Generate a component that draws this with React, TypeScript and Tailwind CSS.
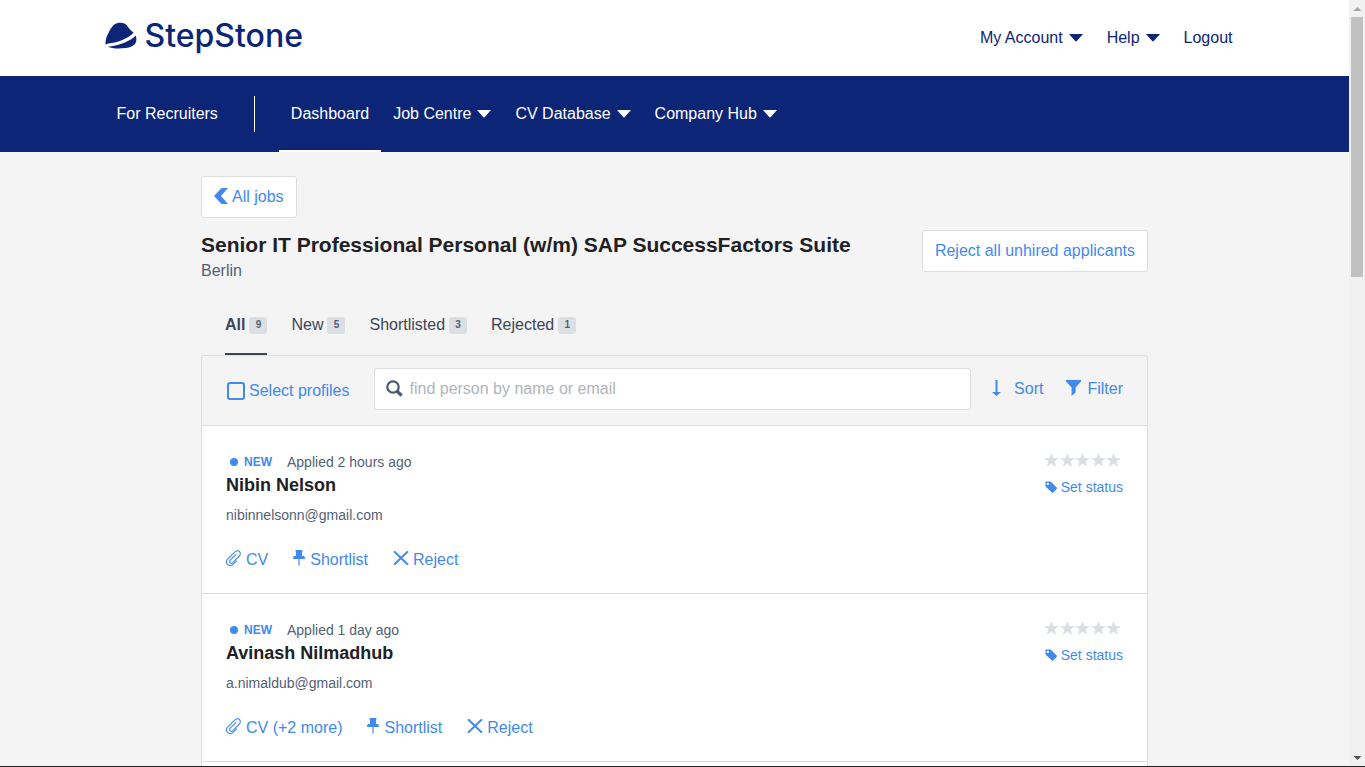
import React, { useState } from "react";

type IconProps = { className?: string };

function HatLogo() {
  return (
    <svg viewBox="46 34 96 82" className="h-[27px] w-8 fill-[#0c2577]" aria-hidden="true">
      <path d="M47 102 C46 90 50 77 57 65 C62 55 68 45 76 40 C84 35 98 34.500 106 39 C114 44 119 56 127 62 C129 64 131 65 132 67 C124 76 108 86 90 92 C74 98 58 98 47 102 Z" />
      <path d="M54 109 C70 107 90 103 106 96 C120 90 132 83 138 75 C142 83 142 93 137 100 C132 107 122 111 108 113 C88 115.500 66 115 54 109 Z" />
    </svg>
  );
}

function Caret({ className = "" }: IconProps) {
  return (
    <svg viewBox="0 0 14 8" className={`h-2 w-[14px] fill-current ${className}`} aria-hidden="true">
      <path d="M0 0H14L7.800 7.100Q7 7.700 6.200 7.100Z" />
    </svg>
  );
}

function ChevronIcon() {
  return (
    <svg viewBox="0 0 14 16" className="mb-[3px] h-4 w-[14px] fill-current" aria-hidden="true">
      <path d="M7.500 0H14L7 8L14 16H7.500L0 8Z" />
    </svg>
  );
}

function SearchIcon() {
  return (
    <svg viewBox="0 0 17 17" className="h-[17px] w-[17px] fill-none stroke-[#4b586e]" aria-hidden="true">
      <circle cx="7" cy="7" r="5.700" strokeWidth="2.200" />
      <path d="M11 11L15.600 15.600" strokeWidth="3.200" />
    </svg>
  );
}

function SortIcon() {
  return (
    <svg viewBox="0 0 9 16" className="mb-[2px] h-4 w-[9px] fill-current" aria-hidden="true">
      <path d="M3.500 0H5.500V12H9L4.500 16L0 12H3.500Z" />
    </svg>
  );
}

function FilterIcon() {
  return (
    <svg viewBox="0 0 15 16" className="mb-[2px] h-4 w-[15px] fill-current" aria-hidden="true">
      <path d="M0 0H15V1.500L9.600 7.500V12.500L5.600 16V7.500L0 1.500Z" />
    </svg>
  );
}

function StarIcon() {
  return (
    <svg viewBox="0 0 15 14" className="h-[14px] w-[15px] fill-current" aria-hidden="true">
      <path d="M7.500 0L9.400 5.100L15 5.300L10.600 8.600L12.200 14L7.500 10.800L2.800 14L4.400 8.600L0 5.300L5.600 5.100Z" />
    </svg>
  );
}

function TagIcon() {
  return (
    <svg viewBox="0 0 12 12" className="h-3 w-3 fill-current" aria-hidden="true">
      <path
        fillRule="evenodd"
        d="M0.500 0.500H5.600L11.600 6.500Q12.300 7.200 11.600 7.900L8.300 11.400Q7.600 12 6.900 11.400L0.500 5.400ZM2.800 1.700A1.200 1.200 0 1 0 2.800 4.100A1.200 1.200 0 1 0 2.800 1.700Z"
      />
    </svg>
  );
}

function ClipIcon() {
  return (
    <svg
      viewBox="0 0 15 16"
      className="mb-1 h-4 w-[15px] fill-none stroke-current"
      strokeWidth="1.100"
      strokeLinecap="round"
      aria-hidden="true"
    >
      <path d="M10.500 10.800L7.300 14.200C5.500 16 3 15.800 1.600 14.400C0.200 13 0.200 10.700 1.700 9.100L8.900 1.800C10.200 0.400 12.200 0.300 13.400 1.500C14.700 2.700 14.600 4.700 13.300 6L6.700 12.600C5.800 13.400 4.700 13.400 4 12.700C3.300 12 3.400 10.900 4.200 10.100L10 4.300" />
    </svg>
  );
}

function PinIcon() {
  return (
    <svg viewBox="0 0 12 16" className="mb-1 h-4 w-3 fill-current" aria-hidden="true">
      <path d="M2.500 0H9.500V1.500H9V6H11Q12 6.500 12 9H0Q0 6.500 1 6H3V1.500H2.500Z" />
      <path d="M5.400 9H6.600V15.500H5.400Z" />
    </svg>
  );
}

function CrossIcon() {
  return (
    <svg viewBox="0 0 16 14" className="mb-1 h-[14px] w-4 fill-none stroke-current" strokeWidth="2" aria-hidden="true">
      <path d="M1 0.300L15 13.700M15 0.300L1 13.700" />
    </svg>
  );
}

const mainLinks = ["Job Centre", "CV Database", "Company Hub"];

const tabs = [
  { label: "All", count: 9 },
  { label: "New", count: 5 },
  { label: "Shortlisted", count: 3 },
  { label: "Rejected", count: 1 },
];

const applicants = [
  { name: "Nibin Nelson", email: "nibinnelsonn@gmail.com", applied: "Applied 2 hours ago", cv: "CV" },
  { name: "Avinash Nilmadhub", email: "a.nimaldub@gmail.com", applied: "Applied 1 day ago", cv: "CV (+2 more)" },
];

function TopBar() {
  return (
    <header className="bg-white text-[#0c2577]">
      <div className="mx-auto flex h-[76px] max-w-[1140px] items-center justify-between">
        <a href="#" className="flex items-center gap-2 pb-[5px]" aria-label="StepStone">
          <HatLogo />
          <span className="font-['Inter',sans-serif] text-[32px] leading-10 font-medium">StepStone</span>
        </a>
        <nav className="flex items-center gap-6 pr-3" aria-label="Account">
          <button type="button" className="flex items-center gap-[6px]">
            My Account
            <Caret />
          </button>
          <button type="button" className="flex items-center gap-[6px]">
            Help
            <Caret />
          </button>
          <a href="#">Logout</a>
        </nav>
      </div>
    </header>
  );
}

function MainNav() {
  return (
    <nav className="bg-[#0c2577] text-white" aria-label="Main">
      <div className="mx-auto flex h-[76px] max-w-[1140px] items-stretch">
        <a href="#" className="flex items-center px-3">
          For Recruiters
        </a>
        <div className="mx-6 h-9 w-px self-center bg-white" />
        <a href="#" aria-current="page" className="flex items-center border-y-2 border-t-transparent border-b-white px-3">
          Dashboard
        </a>
        {mainLinks.map((label) => (
          <button key={label} type="button" className="flex items-center gap-[6px] px-3">
            {label}
            <Caret />
          </button>
        ))}
      </div>
    </nav>
  );
}

function ApplicantRow({ name, email, applied, cv }: (typeof applicants)[number]) {
  return (
    <li className="flex justify-between border-b border-[#dbdfe2] bg-white px-6 pt-[26px] pb-[21px]">
      <div>
        <p className="flex items-center text-sm leading-5 text-[#525f75]">
          <span className="ml-1 h-2 w-2 rounded-full bg-[#4289ef]" />
          <span className="mr-[15px] ml-[6px] text-xs leading-5 font-bold text-[#4289ef]">NEW</span>
          {applied}
        </p>
        <h2 className="text-lg leading-[26px] font-bold text-[#1f2124]">{name}</h2>
        <p className="mt-[7px] text-sm leading-5 text-[#525f75]">{email}</p>
        <div className="mt-[23px] flex gap-[25px] leading-6 text-[#4289ef]">
          <a href="#" className="flex items-center gap-[5px]">
            <ClipIcon />
            {cv}
          </a>
          <button type="button" className="flex items-center gap-[5px]">
            <PinIcon />
            Shortlist
          </button>
          <button type="button" className="flex items-center gap-1">
            <CrossIcon />
            Reject
          </button>
        </div>
      </div>
      <div className="flex flex-col items-end">
        <div
          className="mr-[2px] flex h-4 w-[77px] items-center justify-between text-[#dbdfe3]"
          role="img"
          aria-label="Not rated"
        >
          {[1, 2, 3, 4, 5].map((n) => (
            <StarIcon key={n} />
          ))}
        </div>
        <button type="button" className="mt-[9px] flex items-center gap-1 text-sm leading-5 text-[#4289ef]">
          <TagIcon />
          Set status
        </button>
      </div>
    </li>
  );
}

function ScrollTrack() {
  return (
    <div className="flex w-4 shrink-0 flex-col items-center bg-[#f1f1f1]" aria-hidden="true">
      <svg viewBox="0 0 16 17" className="h-[17px] w-4 shrink-0 fill-[#a3a3a3]">
        <path d="M4.500 11L8.500 7L12.500 11Z" />
      </svg>
      <div className="h-[260px] w-3 bg-[#c1c1c1]" />
      <svg viewBox="0 0 16 17" className="mt-auto h-[17px] w-4 shrink-0 fill-[#505050]">
        <path d="M4.500 7L8.500 11L12.500 7Z" />
      </svg>
    </div>
  );
}

export default function App() {
  const [activeTab, setActiveTab] = useState("All");
  return (
    <div className="flex h-screen flex-col font-['Liberation_Sans',Arial,sans-serif] text-base leading-6">
      <div className="flex min-h-0 flex-1">
        <div className="min-w-0 flex-1 overflow-hidden bg-[#f4f4f4]">
          <TopBar />
          <MainNav />
          <main className="mx-auto max-w-[947px] pt-6">
            <a
              href="#"
              className="inline-flex h-[42px] items-center gap-1 rounded-[3px] border border-[#dbdfe2] bg-white px-3 text-[#4289ef]"
            >
              <ChevronIcon />
              All jobs
            </a>
            <div className="mt-3 flex items-start justify-between">
              <div>
                <h1 className="text-[21px] leading-[30px] font-bold text-[#1f2124]">
                  Senior IT Professional Personal (w/m) SAP SuccessFactors Suite
                </h1>
                <p className="mt-px leading-5 text-[#525f75]">Berlin</p>
              </div>
              <button
                type="button"
                className="h-[42px] rounded-[3px] border border-[#dbdfe2] bg-white px-3 text-[#4289ef]"
              >
                Reject all unhired applicants
              </button>
            </div>
            <div className="mt-8 flex gap-6 px-6" role="tablist">
              {tabs.map(({ label, count }) => (
                <button
                  key={label}
                  type="button"
                  role="tab"
                  aria-selected={activeTab === label}
                  onClick={() => setActiveTab(label)}
                  className={`flex h-[42px] items-start gap-1 border-b-2 text-[#3b4557] ${
                    activeTab === label ? "border-[#3b4557] font-bold" : "border-transparent"
                  }`}
                >
                  {label}
                  <span className="mt-1 h-[17px] w-[18px] rounded-[3px] bg-[#dbdfe3] text-center text-[10px] leading-4 font-bold text-[#525f75]">
                    {count}
                  </span>
                </button>
              ))}
            </div>
            <section className="rounded-t-[3px] border border-b-0 border-[#dbdfe2]">
              <div className="flex h-[70px] items-center border-b border-[#dbdfe2] px-6 pb-1">
                <label className="flex items-center gap-1 pt-1 text-[#4289ef]">
                  <input
                    type="checkbox"
                    className="ml-px h-[18px] w-[18px] appearance-none rounded-[3px] border-2 border-[#4289ef] checked:bg-[#4289ef]"
                  />
                  Select profiles
                </label>
                <label className="mr-[21px] ml-6 flex h-[42px] flex-1 items-center gap-[7px] rounded-[3px] border border-[#dbdfe2] bg-white px-[11px]">
                  <SearchIcon />
                  <input
                    type="search"
                    aria-label="Find person"
                    placeholder="find person by name or email"
                    className="min-w-0 flex-1 outline-none placeholder:text-[#b0b5ba]"
                  />
                </label>
                <button type="button" className="flex items-center gap-[13px] text-[#4289ef]">
                  <SortIcon />
                  Sort
                </button>
                <button type="button" className="ml-[23px] flex items-center gap-[6px] text-[#4289ef]">
                  <FilterIcon />
                  Filter
                </button>
              </div>
              <ul>
                {applicants.map((a) => (
                  <ApplicantRow key={a.email} {...a} />
                ))}
              </ul>
              <div className="h-10 bg-white" />
            </section>
          </main>
        </div>
        <ScrollTrack />
      </div>
      <div className="h-px shrink-0 bg-[#242424]" />
    </div>
  );
}
